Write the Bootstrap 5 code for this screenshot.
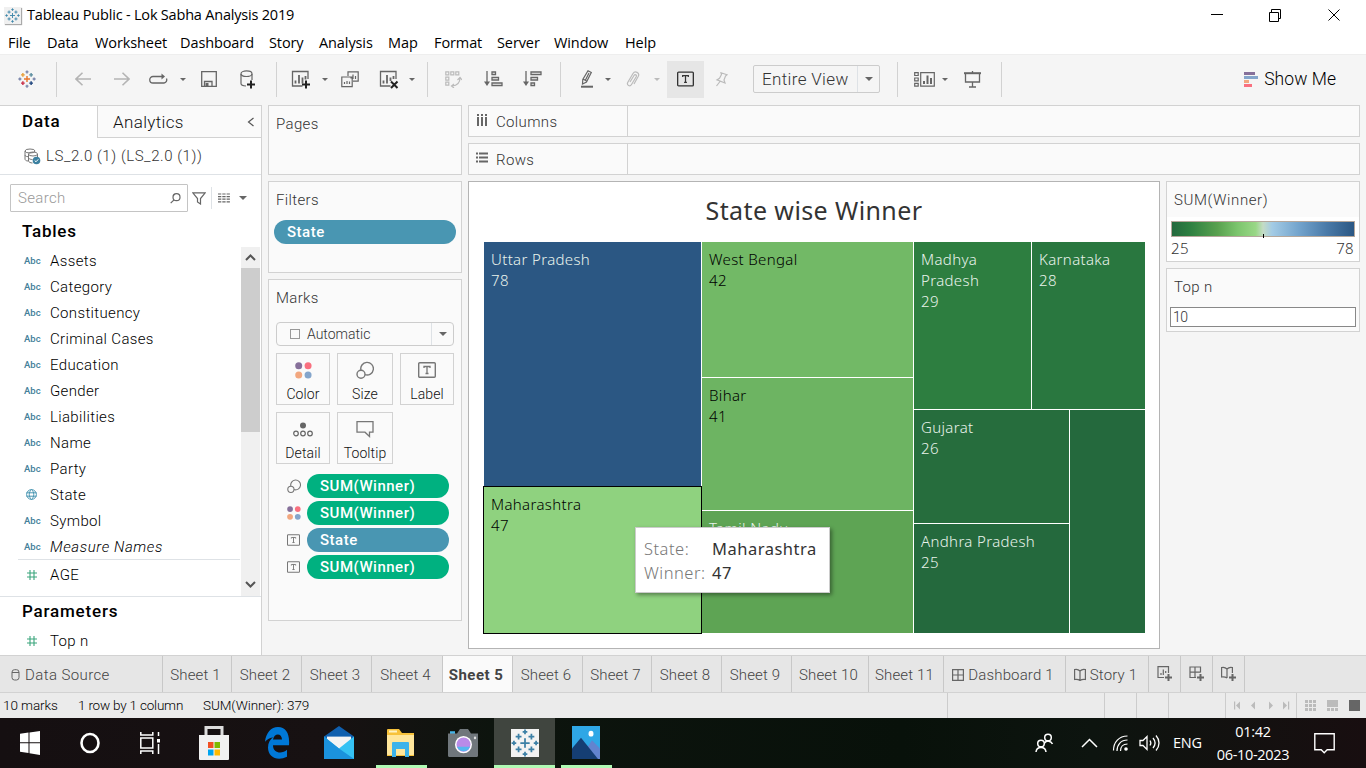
<!DOCTYPE html>
<html lang="en">
<head>
<meta charset="utf-8">
<meta name="viewport" content="width=device-width, initial-scale=1">
<title>Tableau Public - Lok Sabha Analysis 2019</title>
<link href="https://cdn.jsdelivr.net/npm/bootstrap@5.3.0/dist/css/bootstrap.min.css" rel="stylesheet">
<style>
:root{--ln:#d2d2d2;--ink:#666}
body{width:1366px;height:768px;overflow:hidden;background:#f5f5f5;font-family:Roboto,"Liberation Sans",sans-serif;font-size:15px;line-height:20px;color:#333;letter-spacing:.35px;font-weight:300}
svg{display:block;flex:none}
.seg{font-family:"Open Sans","Noto Sans",sans-serif;font-weight:400;color:#000;letter-spacing:-.2px}
.viz{font-family:"Noto Sans",sans-serif;font-weight:300}
.titlebar{height:30px;padding-left:4px;font-size:14.5px}
.menus{height:24px;font-size:14.5px;padding:1px 0 0 8px;letter-spacing:-.1px;grid-template-columns:39px 48px 85px 89px 50px 69px 46px 63px 57px 71px 60px}
.menus span{white-space:nowrap}
.tools{height:51px;padding:0 30px 2px 4px;grid-template-columns:46px 12px 42px 36px 36px 14px 38px 40px 16px 34px 14px 36px 42px 4px 26px 26px 54px 24px 32px 22px 20px 30px 18px 38px 34px 142px 34px 20px 22px 32px 26px 1fr;align-items:center;justify-items:center;border-top:1px solid #eee}
.tools>i.vs{width:1px;height:35px;background:var(--ln)}
.caret{width:0;height:0;border:3px solid transparent;border-top:3.5px solid #666;border-bottom:0}
.caret.big{border-width:4px 4px 0}
.caret.dim{border-top-color:#bbb}
.ton{width:37px;height:37px;background:#e6e6e6}
.fit{width:127px;height:28px;border:1px solid #ccc;border-radius:2px;background:#f5f5f5;font-size:17px}
.work{height:550px}
.side{width:262px;background:#fff;border-top:1px solid var(--ln);border-right:1px solid var(--ln)}
.pane{background:#fafafa;border:1px solid var(--ln)}
.frow{height:26px;padding:1px 0 0 24px;color:#000;white-space:nowrap}
.abc{width:26px;font:500 9.5px/26px Roboto,sans-serif;color:#43809a;letter-spacing:0}
.head{font-weight:500;font-size:17px;color:#000;letter-spacing:.45px}
.pill{height:24px;border-radius:12px;background:#4996b2;color:#fff;font-weight:500;line-height:25px;padding-left:13px;letter-spacing:.5px}
.pill.g{background:#00b180}
.mk{height:52px;border:1px solid var(--ln);font-size:14px;line-height:17px;color:#111;letter-spacing:.1px}
.shelf{height:32px}
.shelf>div{width:159px;border-right:1px solid var(--ln)}
.shelf span{padding-top:1px}
.view{width:692px;height:468px;background:#fff;border:1px solid #b4b4b4}
.cell{padding:7px 0 0 7px;line-height:21px;color:#e9f3ec;font-size:15px;letter-spacing:.35px}
.tip{left:166px;top:345px;width:195px;height:66px;background:#fff;border:1px solid #ccc;box-shadow:2px 2px 4px rgba(0,0,0,.4);font-size:16.5px;line-height:24px;padding:9px 0 0 8px;z-index:3;letter-spacing:.5px}
.tabs{height:38px;background:#e6e6e6;border-top:1px solid var(--ln);border-bottom:1px solid var(--ln);color:#444}
.tabs>div{border-right:1px solid #c8c8c8;display:flex;align-items:center;justify-content:center;white-space:nowrap;letter-spacing:.15px;padding:1px 3px 0 0}
.stat{height:25px;background:#ebebeb;font-size:13.5px;letter-spacing:-.08px;color:#000;padding-left:3px}
.stat>span{padding-bottom:1px}
.stat i{border-left:1px solid #ccc;height:25px}
.task{height:50px;background:linear-gradient(90deg,#150f11,#171112 24%,#0d140e 36%,#08110a 66%,#0d140f 80%,#180e10);color:#fff}
.app{width:62px;height:50px;display:flex;align-items:center;justify-content:center;flex:none}
</style>
</head>
<body>
<svg width="0" height="0" class="position-absolute">
<defs>
<symbol id="tb" viewBox="0 0 24 24"><path d="M12 8v8M8 12h8M6.500 4v5M4 6.500h5M17.500 4v5M15 6.500h5M6.500 15v5M4 17.500h5M17.500 15v5M15 17.500h5M12 .5v4M10 2.500h4M12 19.500v4M10 21.500h4M2.500 10v4M.5 12h4M21.500 10v4M19.500 12h4" fill="none" stroke="currentColor" stroke-width="1.500"/></symbol>
<symbol id="dots" viewBox="0 0 16 16"><circle cx="3.500" cy="3.500" r="3.300" fill="#86709a"/><circle cx="12.300" cy="3.500" r="3.300" fill="#f9707f"/><circle cx="3.500" cy="12.300" r="3.300" fill="#f2a77f"/><circle cx="12.300" cy="12.300" r="3.300" fill="#84a5cb"/></symbol>
<symbol id="size" viewBox="0 0 18 18"><path d="M5 9.300a6.300 6.300 0 1 1 4 4.300" fill="none" stroke="#777" stroke-width="1.400"/><circle cx="5" cy="13.300" r="4" fill="none" stroke="#777" stroke-width="1.400"/></symbol>
<symbol id="tt" viewBox="0 0 18 16"><rect x=".7" y=".7" width="16.600" height="14.600" rx="1" fill="none" stroke="currentColor" stroke-width="1.400"/><path d="M6 6V4.500h6V6M9 4.500v7M7.500 11.500h3" fill="none" stroke="currentColor" stroke-width="1.300"/></symbol>
<symbol id="hash" viewBox="0 0 12 12"><path d="M4 1v10M8 1v10M1 4h10M1 8h10" stroke="#3aa57c" stroke-width="1.100"/></symbol>
</defs>
</svg>

<header class="bg-white">
<div class="titlebar seg d-flex align-items-center">
<span style="color:#3f87ab;background:#f0f0f0;padding:1px;box-shadow:1px 1px 1px #aaa"><svg width="15" height="15"><use href="#tb"/></svg></span>
<span class="ms-1 ps-1" style="margin-left:2px!important">Tableau Public - Lok Sabha Analysis 2019</span>
<svg class="ms-auto" style="margin-right:25px" width="130" height="14" fill="none" stroke="#000"><path d="M0 6.500h12M58.500 4.500h9v9h-9zM60.500 4v-2.500h9v9h-2M117.500 1.500l11 11M128.500 1.500l-11 11"/></svg>
</div>
<nav class="menus seg d-grid align-items-center"><span>File</span><span>Data</span><span>Worksheet</span><span>Dashboard</span><span>Story</span><span>Analysis</span><span>Map</span><span>Format</span><span>Server</span><span>Window</span><span>Help</span></nav>
</header>

<div class="tools d-grid">
<svg width="18" height="18" viewBox="0 0 24 24" fill="none" stroke-width="1.900"><path d="M12 8v8M8 12h8" stroke="#e8762c"/><path d="M6.500 4v5M4 6.500h5" stroke="#e8a03c"/><path d="M17.500 4v5M15 6.500h5" stroke="#5c8ea0"/><path d="M6.500 15v5M4 17.500h5" stroke="#c9304a"/><path d="M17.500 15v5M15 17.500h5" stroke="#1f457e"/><path d="M12 .5v4M10 2.500h4M12 19.500v4M10 21.500h4M2.500 10v4M.5 12h4M21.500 10v4M19.500 12h4" stroke="#7b86ab"/></svg>
<i class="vs"></i>
<svg width="16" height="14" fill="none" stroke="#b4b4b4" stroke-width="1.600"><path d="M16 7H1M7.500.7L1 7l6.500 6.300"/></svg>
<svg width="16" height="14" fill="none" stroke="#b4b4b4" stroke-width="1.600"><path d="M0 7h15M8.500.7L15 7l-6.500 6.300"/></svg>
<svg width="19" height="12" fill="none" stroke="#666" stroke-width="1.300"><path d="M13 3.500H4a3 3 0 0 0 0 6.500h11a3.200 3.200 0 0 0 2.500-4.500"/><path d="M12.500.5l3.500 3-3.500 3z" fill="#666" stroke="none"/></svg>
<i class="caret"></i>
<svg width="16" height="16" fill="none" stroke="#666" stroke-width="1.300"><path d="M.7.7h14.600v14.600H.7zM3.500 15v-4.500h7.500V15"/><path d="M4.500 12h3v3.300h-3z" fill="#666" stroke="none"/></svg>
<svg width="16" height="19" fill="none" stroke="#666" stroke-width="1.200"><ellipse cx="6.500" cy="3.700" rx="5.500" ry="2.800"/><path d="M1 4v9.500c0 1.500 2 2.300 5 2.500M12 4v6"/><path d="M11 10.500v8M7 14.500h8" stroke="#222" stroke-width="2"/></svg>
<i class="vs"></i>
<svg width="20" height="19" fill="none" stroke="#666" stroke-width="1.300"><path d="M17 9V1.500H1.500v14.500h10"/><path d="M4.500 13.500v-3M8 13.500V5M11.500 13.500V7.500M14.500 9.500V6" stroke-width="1.800"/><path d="M15 10.500v8M11 14.500h8" stroke="#222" stroke-width="2"/></svg>
<i class="caret"></i>
<svg width="18" height="17" fill="none" stroke="#666" stroke-width="1.200"><path d="M7 5V.8h10.200v9.400H12M.8 6h10.400v9.700H.8zM3.500 13v-2M6 13v-3M8.500 13v-2.500M10 7.500v-2M12 8V3.500M14.500 8V5"/></svg>
<svg width="20" height="19" fill="none" stroke="#666" stroke-width="1.300"><path d="M17 9V1.500H1.500v14.500h10"/><path d="M4.500 13.500v-3M8 13.500V5M11.500 11V7.500M14.500 9V6" stroke-width="1.800"/><path d="M12 11.500l6.500 6.500M18.500 11.500L12 18" stroke="#222" stroke-width="2"/></svg>
<i class="caret"></i>
<i class="vs"></i>
<svg width="17" height="17" fill="none" stroke="#bbb" stroke-width="1.200"><path d="M.8.800h3v3h-3zM5.800.8h3v3h-3zM10.800.8h3v3h-3zM.8 6.200h3v3h-3zM.8 11.200h3v3h-3z"/><path d="M15 7c0 5-3 7.500-8 8M12.500 9L15 6.500 17 9M9 13l-2.500 2L9 17"/></svg>
<svg width="19" height="16" fill="none" stroke="#666" stroke-width="1.300"><path d="M3 0v13M8 1h3.500v2.500H8zM8 6.500h6.500V9H8zM8 12h10v2.500H8z"/><path d="M0 10.500h6L3 15z" fill="#666" stroke="none"/></svg>
<svg width="19" height="16" fill="none" stroke="#666" stroke-width="1.300"><path d="M3 0v13M8 1h10v2.500H8zM8 6.500h6.500V9H8zM8 12h3.500v2.500H8z"/><path d="M0 10.500h6L3 15z" fill="#666" stroke="none"/></svg>
<i class="vs"></i>
<svg width="14" height="18" fill="none" stroke="#666" stroke-width="1.200"><path d="M8 .8l3.300 1.600L6.500 12l-4 2 .3-4.600zM3 9l3.500 2M5.500 10L9 3"/><path d="M1 16.700h12" stroke-width="2"/></svg>
<i class="caret"></i>
<svg width="14" height="17" fill="none" stroke="#bbb" stroke-width="1.200"><path d="M4 11l4-6.500c1-1.500 3-.5 2.200 1.200L5.500 13.500c-1.500 2.500-5 .8-3.800-2L7 2.500c2-3.200 7-.8 5.300 2.700L8 13"/></svg>
<i class="caret dim"></i>
<span class="ton d-flex align-items-center justify-content-center"><svg width="17" height="16" style="color:#333"><use href="#tt"/></svg></span>
<svg width="13" height="15" fill="none" stroke="#bbb" stroke-width="1.200"><path d="M6 .8l6 2-1.500 1.200L9 8l1 3-8-3.200 2.500-1.500L6.500 2.500zM5 9.500L1.500 14"/></svg>
<span class="fit d-flex align-items-center ms-auto"><span class="flex-grow-1 ps-2">Entire View</span><span class="h-100 border-start d-flex align-items-center justify-content-center" style="width:22px"><i class="caret big"></i></span></span>
<i class="vs"></i>
<svg width="21" height="15" fill="none" stroke="#666" stroke-width="1.200"><path d="M.7.7h3.500v2.800H.700zM.7 6h3.500v2.800H.7zM.7 11.300h3.500v2.800H.7zM6.700.7h13.600v13.400H6.700z"/><path d="M10 12V9M13.500 12V3.500M17 12V6" stroke-width="2"/></svg>
<i class="caret"></i>
<svg width="17" height="17" fill="none" stroke="#666" stroke-width="1.300"><path d="M1.500 3v8h14V3M8.500 11v5M5 16h7M8.500 0v2"/><path d="M0 2.200h17" stroke-width="2"/></svg>
<i class="vs"></i>
<span class="ms-auto d-flex align-items-center" style="font-size:17.500px;color:#000;letter-spacing:.05px"><svg width="14" height="15"><path d="M0 0h11v3H0z" fill="#86709a"/><path d="M0 4h14v3H0z" fill="#84a5cb"/><path d="M0 8h5v3H0z" fill="#f2a77f"/><path d="M0 12h8v3H0z" fill="#f9707f"/></svg><span style="margin-left:6px">Show Me</span></span>
</div>

<main class="work d-flex">
<aside class="side d-flex flex-column">
<div class="d-flex" style="height:32px">
<div class="head" style="width:97px;padding:5px 0 0 22px;letter-spacing:.9px">Data</div>
<div class="flex-grow-1 d-flex align-items-center border-start border-bottom" style="background:#fafafa;padding:0 6px 0 15px;font-size:17px;color:#111;border-color:var(--ln)!important"><span>Analytics</span><svg class="ms-auto" width="8" height="10" fill="none" stroke="#555" stroke-width="1.200"><path d="M6.500 1L1.500 5l5 4"/></svg></div>
</div>
<div class="d-flex align-items-center border-bottom" style="height:37px;padding-left:24px;letter-spacing:.55px">
<svg width="17" height="17" fill="none" stroke="#777"><ellipse cx="6" cy="3" rx="5" ry="2"/><path d="M1 3v8c0 1 1 2 3 2M1 7c0 1 1 1.500 3 1.700"/><ellipse cx="9" cy="6" rx="4.500" ry="2"/><path d="M4.500 6v7c0 1 2 2 4 2M4.500 10c1 1 2 1.500 4 1.500M13.500 6v3"/><circle cx="12.500" cy="12.500" r="3.800" fill="#3b80a0" stroke="none"/><path d="M10.700 12.500l1.300 1.300 2.300-2.500" stroke="#fff"/></svg>
<span style="margin-left:5px">LS_2.0 (1) (LS_2.0 (1))</span></div>
<div class="d-flex align-items-center" style="height:28px;margin:9px 0 0 10px">
<div class="d-flex align-items-center h-100" style="width:178px;padding:0 6px 0 7px;color:#999;border:1px solid #c4c4c4;border-radius:1px"><span>Search</span><svg class="ms-auto" width="11" height="11" fill="none" stroke="#666" stroke-width="1.200"><circle cx="6.500" cy="4.200" r="3.500"/><path d="M4 6.800L.7 10.200"/></svg></div>
<svg style="margin-left:4px" width="14" height="13" fill="none" stroke="#666" stroke-width="1.200"><path d="M.8.800h12.400L8.500 6.500V12l-3-2V6.500z"/></svg>
<i class="border-start" style="height:22px;margin:0 6px 0 5px"></i>
<svg width="12" height="10" stroke="#666" stroke-width="1.200"><path d="M0 1h12M0 3.600h12M0 6.200h12M0 8.800h12" stroke-dasharray="3.300 1"/></svg>
<i class="caret big" style="margin-left:9px"></i>
</div>
<div class="head" style="padding:9px 0 0 22px;height:35px;letter-spacing:.75px">Tables</div>
<div class="d-flex" style="height:349px">
<div class="flex-grow-1">
<div class="frow d-flex align-items-center"><span class="abc">Abc</span>Assets</div>
<div class="frow d-flex align-items-center"><span class="abc">Abc</span>Category</div>
<div class="frow d-flex align-items-center"><span class="abc">Abc</span>Constituency</div>
<div class="frow d-flex align-items-center"><span class="abc">Abc</span>Criminal Cases</div>
<div class="frow d-flex align-items-center"><span class="abc">Abc</span>Education</div>
<div class="frow d-flex align-items-center"><span class="abc">Abc</span>Gender</div>
<div class="frow d-flex align-items-center"><span class="abc">Abc</span>Liabilities</div>
<div class="frow d-flex align-items-center"><span class="abc">Abc</span>Name</div>
<div class="frow d-flex align-items-center"><span class="abc">Abc</span>Party</div>
<div class="frow d-flex align-items-center"><svg style="margin:0 13px 0 2px" width="11" height="11" fill="none" stroke="#4996b2"><circle cx="5.500" cy="5.500" r="4.900"/><path d="M.5 3.800h10M.5 7.200h10M5.500.5C2.500 3 2.500 8 5.500 10.500C8.500 8 8.500 3 5.500.5"/></svg>State</div>
<div class="frow d-flex align-items-center"><span class="abc">Abc</span>Symbol</div>
<div class="frow d-flex align-items-center fst-italic"><span class="abc fst-normal">Abc</span><span style="letter-spacing:.6px">Measure Names</span></div>
<div class="border-top" style="margin-left:18px"></div>
<div class="frow d-flex align-items-center" style="height:29px"><svg style="margin:0 12px 0 2px" width="12" height="12"><use href="#hash"/></svg>AGE</div>
</div>
<div class="d-flex flex-column" style="width:19px;margin-left:1px;background:#f0f0f0">
<svg width="19" height="21" fill="none" stroke="#555" stroke-width="2"><path d="M5 13l4.500-4.500L14 13"/></svg>
<div style="height:164px;background:#cdcdcd"></div>
<svg class="mt-auto" width="19" height="21" fill="none" stroke="#555" stroke-width="2"><path d="M5 7l4.500 4.500L14 7"/></svg>
</div>
<i style="width:1px"></i>
</div>
<div class="border-top">
<div class="head" style="padding:4px 0 0 22px;height:30px;letter-spacing:.8px">Parameters</div>
<div class="frow d-flex align-items-center"><svg style="margin:0 12px 0 2px" width="12" height="12"><use href="#hash"/></svg>Top n</div>
</div>
</aside>

<section class="d-flex flex-column" style="width:194px;margin-left:6px;gap:6px">
<div class="pane" style="height:70px;padding:8px 7px">Pages</div>
<div class="pane" style="height:92px;padding:8px 5px"><div style="margin-left:2px">Filters</div><div class="pill" style="margin-top:10px">State</div></div>
<div class="pane" style="height:342px;padding:8px 7px">
<div>Marks</div>
<div class="d-flex align-items-center rounded-1" style="height:24px;margin-top:14px;border:1px solid #ccc;font-size:14px;letter-spacing:0"><i style="width:10px;height:10px;border:1px solid #999;margin:0 7px 0 13px"></i><span>Automatic</span><span class="ms-auto h-100 d-flex align-items-center justify-content-center border-start" style="width:22px"><i class="caret big"></i></span></div>
<div class="d-grid" style="grid-template-columns:54px 56px 54px;gap:7px;margin-top:7px">
<div class="mk d-flex flex-column align-items-center"><svg style="margin:8px 0 7px" width="17" height="17"><use href="#dots"/></svg>Color</div>
<div class="mk d-flex flex-column align-items-center"><svg style="margin:7px 0 7px" width="18" height="18"><use href="#size"/></svg>Size</div>
<div class="mk d-flex flex-column align-items-center"><svg style="margin:8px 0 8px;color:#777" width="18" height="16"><use href="#tt"/></svg>Label</div>
<div class="mk d-flex flex-column align-items-center"><svg style="margin:9px 0 7px" width="20" height="16" fill="none" stroke="#666" stroke-width="1.200"><circle cx="10" cy="3.500" r="3" fill="#666" stroke="none"/><circle cx="3" cy="11.500" r="2.300"/><circle cx="10" cy="11.500" r="2.300"/><circle cx="17" cy="11.500" r="2.300"/></svg>Detail</div>
<div class="mk d-flex flex-column align-items-center"><svg style="margin:7px 0 7px" width="18" height="18" fill="none" stroke="#777" stroke-width="1.300"><path d="M1 1.700h16v10.500h-3.500v4.300l-4.500-4.300H1z"/></svg>Tooltip</div>
</div>
<div class="d-grid align-items-center" style="grid-template-columns:31px 142px;row-gap:3px;margin-top:10px;grid-auto-rows:24px">
<svg style="margin-left:11px" width="14" height="14"><use href="#size"/></svg><div class="pill g">SUM(Winner)</div>
<svg style="margin-left:11px" width="14" height="14"><use href="#dots"/></svg><div class="pill g">SUM(Winner)</div>
<svg style="margin-left:11px;color:#777" width="13" height="12"><use href="#tt"/></svg><div class="pill">State</div>
<svg style="margin-left:11px;color:#777" width="13" height="12"><use href="#tt"/></svg><div class="pill g">SUM(Winner)</div>
</div>
</div>
</section>

<section class="d-flex flex-column" style="width:892px;margin-left:6px;gap:6px">
<div class="pane shelf"><div class="h-100 d-flex align-items-center"><svg style="margin:0 8px 3px 7px" width="12" height="12" stroke="#666" stroke-width="2"><path d="M2 0v2M6 0v2M10 0v2M2 3v9M6 3v9M10 3v9"/></svg><span>Columns</span></div></div>
<div class="pane shelf"><div class="h-100 d-flex align-items-center"><svg style="margin:0 8px 3px 7px" width="12" height="11" stroke="#666" stroke-width="2"><path d="M0 1.500h2M0 5.500h2M0 9.500h2M3 1.500h9M3 5.500h9M3 9.500h9"/></svg><span>Rows</span></div></div>
<div class="d-flex" style="gap:6px">
<div class="view position-relative viz">
<div class="text-center" style="height:60px;padding-top:15px;font-size:25px;line-height:26px;font-weight:400;color:#333;letter-spacing:.4px">State wise Winner</div>
<div class="d-flex" style="gap:1px;height:391px;margin-left:15px;width:661px">
<div class="d-flex flex-column" style="width:217px;gap:1px">
<div class="cell" style="height:244px;background:#2b5783">Uttar Pradesh<br>78</div>
<div class="cell position-relative z-1" style="height:148px;margin:-1px;background:#8fd27f;color:#000;border:1px solid #000">Maharashtra<br>47</div>
</div>
<div class="d-flex flex-column" style="width:211px;gap:1px">
<div class="cell" style="height:135px;background:#72b966;color:#000">West Bengal<br>42</div>
<div class="cell" style="height:132px;background:#6db462;color:#000">Bihar<br>41</div>
<div class="cell flex-grow-1" style="background:#5ea454">Tamil Nadu</div>
</div>
<div class="d-flex flex-column" style="width:231px;gap:1px">
<div class="d-flex" style="height:167px;gap:1px">
<div class="cell" style="width:117px;background:#2d7e40">Madhya<br>Pradesh<br>29</div>
<div class="cell flex-grow-1" style="background:#29773f">Karnataka<br>28</div>
</div>
<div class="d-flex flex-grow-1" style="gap:1px">
<div class="d-flex flex-column" style="width:155px;gap:1px">
<div class="cell" style="height:113px;background:#266d3d">Gujarat<br>26</div>
<div class="cell flex-grow-1" style="background:#24693d">Andhra Pradesh<br>25</div>
</div>
<div class="flex-grow-1" style="background:#24693d"></div>
</div>
</div>
</div>
<div class="tip position-absolute d-grid" style="grid-template-columns:68px 1fr;grid-auto-rows:24px"><span style="color:#777">State:</span><span class="fw-normal">Maharashtra</span><span style="color:#777">Winner:</span><span class="fw-normal">47</span></div>
</div>
<div class="d-flex flex-column" style="width:194px;gap:6px">
<div class="pane bg-white" style="height:81px"><div style="background:#fafafa;height:35px;padding:8px 7px;letter-spacing:.6px">SUM(Winner)</div>
<div style="height:16px;margin:4px 4px 0;border:1px solid #b5a79b;background:linear-gradient(90deg,#24693d,#2e8041 10%,#59a14f 25%,#7cc56d 36%,#99d786 46%,#c4dcc5 50%,#a3cbe5 55%,#72a3cc 70%,#4a7aa8 85%,#2b5783)"></div>
<div class="position-relative" style="width:1px;height:4px;background:#000;margin:-3px 0 0 96px"></div>
<div class="viz d-flex justify-content-between" style="padding:0 5px 0 4px">
<span>25</span><span>78</span></div></div>
<div class="pane" style="height:64px;padding:8px 3px 0"><div style="margin-left:4px">Top n</div><div class="bg-white" style="height:20px;margin-top:10px;border:1px solid #888;padding-left:2px;line-height:18px;font-size:14px;letter-spacing:-.4px">10</div></div>
</div>
</div>
</section>
</main>

<nav class="tabs d-flex">
<div class="justify-content-start" style="width:163px;padding-left:11px;letter-spacing:.4px"><svg width="9" height="12" fill="none" stroke="#666"><rect x="1" y=".7" width="7" height="10.300" rx="2.500"/><path d="M1 3.500h7"/></svg><span style="margin-left:5px">Data Source</span></div>
<div style="width:69px">Sheet 1</div><div style="width:70px">Sheet 2</div><div style="width:70px">Sheet 3</div><div style="width:71px">Sheet 4</div>
<div class="fw-bold" style="width:70px;background:#fafafa;letter-spacing:.45px">Sheet 5</div>
<div style="width:70px">Sheet 6</div><div style="width:69px">Sheet 7</div><div style="width:70px">Sheet 8</div><div style="width:70px">Sheet 9</div><div style="width:77px">Sheet 10</div><div style="width:75px">Sheet 11</div>
<div style="width:122px"><svg width="12" height="12" fill="none" stroke="#666" stroke-width="1.200"><path d="M.6.6h10.800v10.800H.6zM6 .6v10.800M.6 6h10.800"/></svg><span class="ms-1">Dashboard 1</span></div>
<div style="width:83px"><svg width="12" height="13" fill="none" stroke="#666" stroke-width="1.200"><path d="M.6 1.500c2-.5 4 0 5.400 1.500c1.400-1.500 3.400-2 5.400-1.500v10c-2-.3-4 0-5.400 1c-1.400-1-3.400-1.300-5.400-1zM6 3v9"/></svg><span class="ms-1">Story 1</span></div>
<div class="p-0" style="width:32px"><svg width="16" height="16" fill="none" stroke="#666" stroke-width="1.200"><path d="M11.500 7V.6H1v10.900h6M4 9V7M6.300 9V3.500M8.700 7V5"/><path d="M11.500 8v7M8 11.500h7" stroke-width="2"/></svg></div>
<div class="p-0" style="width:32px"><svg width="16" height="16" fill="none" stroke="#666" stroke-width="1.200"><path d="M11.500 6.500V1H1v10.500h6M6 1v10.500M1 6.200h10.500"/><path d="M11.500 8v7M8 11.500h7" stroke-width="2"/></svg></div>
<div class="p-0" style="width:32px"><svg width="16" height="16" fill="none" stroke="#666" stroke-width="1.200"><path d="M6 12c-1.400-1-3.400-1.300-5.400-1V1.500c2-.5 4 0 5.400 1.500c1.400-1.500 3.400-2 5.400-1.500V7M6 3v9"/><path d="M11.500 8v7M8 11.500h7" stroke-width="2"/></svg></div>
</nav>
<div class="stat d-flex align-items-center"><span style="width:75px">10 marks</span><span style="width:125px;letter-spacing:-.2px">1 row by 1 column</span><span>SUM(Winner): 379</span>
<div class="ms-auto d-flex align-items-center">
<i style="width:157px"></i><i style="width:32px"></i><i style="width:32px"></i><i style="width:57px"></i><i style="width:71px"></i><i style="width:70px"></i>
</div>
<svg style="margin-left:-133px" width="133" height="14" fill="#bbb"><path d="M1 2.500h1.200v8H1zM7 2.500v8L3 6.500zM22 2.500v8l-4-4zM36 2.500v8l4-4zM50 2.500v8l4-4zM55 2.500h1.200v8H55z"/><path d="M72 1h3v3h-3zM76 1h3v3h-3zM80 1h3v3h-3zM72 5h3v3h-3zM76 5h3v3h-3zM80 5h3v3h-3zM72 9h3v3h-3zM76 9h3v3h-3zM80 9h3v3h-3zM94 1h11v7H94zM94 9h3v3h-3zM98 9h3v3h-3zM102 9h3v3h-3z"/><path d="M116 1h11v11h-11z" fill="#666"/></svg>
</div>

<footer class="task seg d-flex text-white">
<div class="app" style="width:60px"><svg width="20" height="24" fill="#fff"><path d="M0 2.800l8.500-1.200v9.700H0zM9.500 1.500L20 0v11.300H9.500zM0 12.300h8.500V22L0 20.800zM9.500 12.300H20V24L9.500 22.300z"/></svg></div>
<div class="app" style="width:60px"><svg width="20" height="22" fill="none" stroke="#fff" stroke-width="2.600"><ellipse cx="10" cy="11" rx="8.500" ry="9"/></svg></div>
<div class="app" style="width:61px"><svg width="21" height="22" fill="none" stroke="#fff" stroke-width="1.500"><path d="M.8 0v3h12V0M.8 6h12v10H.8zM.8 22v-3h12v3M18.500 0v4M18.500 12v10"/><path d="M17 7h3v3.500h-3z" fill="#fff" stroke="none"/></svg></div>
<div class="app" style="width:65px"><svg width="30" height="35"><path d="M7 10V1.500h16V10" fill="none" stroke="#ddd" stroke-width="3"/><path d="M0 9h30v24q0 1-1 1H1q-1 0-1-1z" fill="#f1f1f1"/><path d="M9 16h5.500v6H9z" fill="#f25022"/><path d="M15.500 16H21v6h-5.500z" fill="#7fba00"/><path d="M9 23.500h5.500v6H9z" fill="#00a4ef"/><path d="M15.500 23.500H21v6h-5.500z" fill="#ffb900"/></svg></div>
<div class="app"><svg width="26" height="32" viewBox="0 0 26 28" preserveAspectRatio="none"><path d="M1 13C2 5 7 0 14 0c8 0 12 6 11 16H9c0 7 9 8 14 4v6C14 30 4 27 4 18c0-4 2-7 5-9-4 .5-6 2-8 4zM9 11h9c0-6-8-6-9 0z" fill="#0078d7"/></svg></div>
<div class="app"><svg style="margin-bottom:2px" width="30" height="33" viewBox="0 0 30 28" preserveAspectRatio="none"><path d="M0 9L15 0l15 9v3H0z" fill="#0f5fae"/><path d="M3 9h24v12H3z" fill="#f4f4f4"/><path d="M0 9l15 10L30 9v19H0z" fill="#35c2f3"/><path d="M0 9l15 10 15 9H0z" fill="#1b92dd"/></svg></div>
<div class="app position-relative"><svg width="28" height="28"><path d="M0 1q0-1 1-1h11l3 4h12v23H0z" fill="#f7c23b"/><path d="M0 6h27v19q0 1-1 1H1q-1 0-1-1z" fill="#ffe69b"/><path d="M5 28V14q0-1 1-1h15q1 0 1 1v14h-4v-8H9v8z" fill="#3db3ea"/><path d="M2 1.500h8v2H2z" fill="#fff3c4"/></svg><i class="position-absolute bottom-0" style="width:51px;height:3px;background:#b0fab4"></i></div>
<div class="app"><svg width="31" height="29" viewBox="0 0 31 26" preserveAspectRatio="none"><path d="M2 2h5v3H2z" fill="#44b4e8"/><path d="M9 4l3-4h8l3 4h7v20q0 1-1 1H1q-1 0-1-1V4z" fill="#70777c"/><ellipse cx="15.500" cy="14" rx="8.500" ry="7.800" fill="#fff"/><ellipse cx="15.500" cy="14" rx="7" ry="6.400" fill="#b98be8"/><path d="M9 16a7 6.400 0 0 0 13 0z" fill="#55b7ee"/><circle cx="27" cy="8" r="1.200" fill="#ddd"/></svg></div>
<div class="app position-relative" style="width:61px;background:#40453f;color:#3c80a6"><span style="background:#f3f3f3"><svg width="28" height="28"><use href="#tb"/></svg></span><i class="position-absolute bottom-0" style="width:61px;height:3px;background:#b0fab4"></i></div>
<div class="app position-relative"><svg width="28" height="33" viewBox="0 0 28 28" preserveAspectRatio="none" style="margin-bottom:2px"><path d="M0 0h28v28H0z" fill="#2fa7e6"/><path d="M14 20L20 12l8 7v9H14z" fill="#6284cf"/><path d="M0 19l9-9 17 18H0z" fill="#153e73"/><circle cx="19" cy="6.500" r="2.500" fill="#fff"/></svg><i class="position-absolute bottom-0" style="width:51px;height:3px;background:#b0fab4"></i></div>
<div class="ms-auto d-flex align-items-center">
<svg width="20" height="20" fill="none" stroke="#fff" stroke-width="1.500"><circle cx="13" cy="4.500" r="3.300"/><path d="M9.500 10c2-2.800 6.500-2.500 8 1"/><circle cx="6" cy="10.500" r="3.300"/><path d="M1 19c.5-6 9.500-6 10 0"/></svg>
<svg style="margin-left:26px" width="17" height="10" fill="none" stroke="#fff" stroke-width="1.500"><path d="M1 9l7.500-7.500L16 9"/></svg>
<svg style="margin-left:14px" width="17" height="18" fill="none" stroke="#fff" stroke-width="1.200"><path d="M1.500 16.500C1.500 8 7 2 15.500 2M5 17c0-6.500 4-11 10.500-11M8.500 17c0-4 2.500-7 7-7"/><circle cx="14" cy="15" r="1.800" fill="#fff" stroke="none"/></svg>
<svg style="margin-left:10px" width="22" height="18" fill="none" stroke="#fff" stroke-width="1.300"><path d="M1 6.500h3l4-4v13l-4-4H1zM11 6.500c1 1.500 1 3.500 0 5M14 4c2.500 3 2.500 7 0 10M17 1.500c4 4.500 4 10.500 0 15"/></svg>
<span style="margin-left:12px;width:30px;font-size:14.500px">ENG</span>
<span class="text-center" style="margin:0 0 1px 11px;width:78px;font-size:14.500px;letter-spacing:-.3px;line-height:23px">01:42<br>06-10-2023</span>
<svg style="margin:0 31px 0 22px" width="21" height="21" fill="none" stroke="#fff" stroke-width="1.400"><path d="M.8.800h19.400v16h-7l-3 3-3-3H.8z"/></svg>
</div>
</footer>
<script src="https://cdn.jsdelivr.net/npm/bootstrap@5.3.0/dist/js/bootstrap.bundle.min.js"></script>
</body>
</html>
